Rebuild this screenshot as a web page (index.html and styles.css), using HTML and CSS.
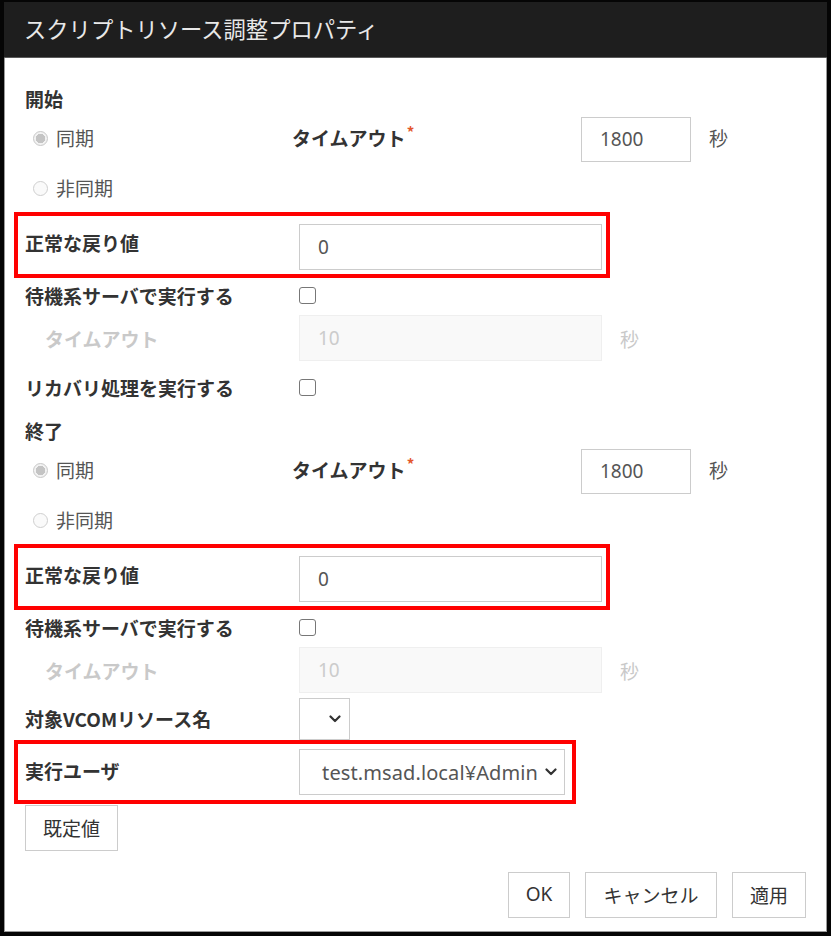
FILE: index.html
```html
<!DOCTYPE html>
<html lang="ja">
<head>
<meta charset="utf-8">
<title>スクリプトリソース調整プロパティ</title>
<link rel="stylesheet" href="styles.css">
</head>
<body>
<div class="dialog">
  <div class="frame">
    <div class="titlebar">スクリプトリソース調整プロパティ</div>
    <div class="content">

      <section class="group">
        <div class="group-title">開始</div>
        <div class="row row-sync">
          <label class="radio-cell"><input type="radio" class="radio" checked disabled>同期</label>
          <span class="timeout-label">タイムアウト<sup class="req">*</sup></span>
          <input class="field field-num" type="text" value="1800">
          <span class="unit">秒</span>
        </div>
        <div class="row row-async">
          <label class="radio-cell"><input type="radio" class="radio" disabled>非同期</label>
        </div>
        <div class="row hl hl-wide">
          <span class="label hl-label">正常な戻り値</span>
          <input class="field field-wide" type="text" value="0">
        </div>
        <div class="row row-check">
          <span class="label">待機系サーバで実行する</span>
          <input type="checkbox" class="check">
        </div>
        <div class="row row-timeout">
          <span class="label label-disabled">タイムアウト</span>
          <input class="field field-wide field-disabled" type="text" value="10" disabled>
          <span class="unit unit-disabled">秒</span>
        </div>
        <div class="row row-last">
          <span class="label">リカバリ処理を実行する</span>
          <input type="checkbox" class="check">
        </div>
      </section>

      <section class="group group-end">
        <div class="group-title">終了</div>
        <div class="row row-sync">
          <label class="radio-cell"><input type="radio" class="radio" checked disabled>同期</label>
          <span class="timeout-label">タイムアウト<sup class="req">*</sup></span>
          <input class="field field-num" type="text" value="1800">
          <span class="unit">秒</span>
        </div>
        <div class="row row-async">
          <label class="radio-cell"><input type="radio" class="radio" disabled>非同期</label>
        </div>
        <div class="row hl hl-wide">
          <span class="label hl-label">正常な戻り値</span>
          <input class="field field-wide" type="text" value="0">
        </div>
        <div class="row row-check">
          <span class="label">待機系サーバで実行する</span>
          <input type="checkbox" class="check">
        </div>
        <div class="row row-timeout">
          <span class="label label-disabled">タイムアウト</span>
          <input class="field field-wide field-disabled" type="text" value="10" disabled>
          <span class="unit unit-disabled">秒</span>
        </div>
        <div class="row row-vcom">
          <span class="label">対象VCOMリソース名</span>
          <div class="select select-small">
            <span class="select-text"></span>
            <svg class="chev" width="12" height="8" viewBox="0 0 12 8"><path d="M1.5 1.5 L6 6 L10.5 1.5" fill="none" stroke="#333" stroke-width="2.2" stroke-linecap="round" stroke-linejoin="round"/></svg>
          </div>
        </div>
        <div class="row hl hl-user">
          <span class="label">実行ユーザ</span>
          <div class="select select-user">
            <span class="select-text">test.msad.local¥Admin</span>
            <svg class="chev" width="12" height="8" viewBox="0 0 12 8"><path d="M1.5 1.5 L6 6 L10.5 1.5" fill="none" stroke="#333" stroke-width="2.2" stroke-linecap="round" stroke-linejoin="round"/></svg>
          </div>
        </div>
      </section>

      <div class="default-row">
        <button class="btn btn-default" type="button">既定値</button>
      </div>

      <div class="footer">
        <button class="btn btn-ok" type="button">OK</button>
        <button class="btn btn-cancel" type="button">キャンセル</button>
        <button class="btn btn-apply" type="button">適用</button>
      </div>
    </div>
  </div>
</div>
</body>
</html>
```

FILE: styles.css
```css
* { box-sizing: border-box; }

html, body {
  margin: 0;
  padding: 0;
  background: #ffffff;
}

body {
  font-family: "Noto Sans CJK JP", "Noto Sans", sans-serif;
  font-size: 19px;
  color: #333333;
}

.dialog {
  width: 831px;
  height: 936px;
  border: 4px solid #050505;
  border-top-width: 2px;
  border-right-width: 4px;
  background: #ffffff;
}

.frame {
  height: 100%;
  border-left: 1px solid #9a9a9a;
  border-right: 1px solid #9a9a9a;
  border-bottom: 1px solid #9a9a9a;
  display: flex;
  flex-direction: column;
}

.titlebar {
  height: 56px;
  background: #1e1e1e;
  border-bottom: 1px solid #5a5a5a;
  color: #e8e8e8;
  font-size: 22.3px;
  line-height: 53px;
  padding-left: 20px;
  margin-left: -1px;
  margin-right: -1px;
}

.content {
  padding: 26px 20px 0 20px;
  display: flex;
  flex-direction: column;
}

.group {
  display: flex;
  flex-direction: column;
  margin-bottom: 4px;
}

.group-end {
  margin-bottom: 0;
}

.group-title {
  height: 32px;
  line-height: 30px;
  font-weight: 700;
  color: #333;
}

.row {
  display: flex;
  align-items: center;
}

.row-sync { height: 46px; }
.row-sync .radio-cell,
.row-sync .timeout-label { margin-bottom: 4px; }
.row-async { height: 50px; }
.row-check { height: 36px; padding-bottom: 2px; }
.row-timeout { height: 50px; padding-bottom: 2px; }
.row-last { height: 48px; padding-bottom: 2px; }
.row-vcom { height: 44px; padding-top: 1px; }

.radio-cell {
  width: 267px;
  display: flex;
  align-items: center;
  color: #555;
  font-weight: 400;
}

.radio {
  appearance: none;
  -webkit-appearance: none;
  width: 15px;
  height: 15px;
  margin: 2px 8px 0 8px;
  border: 1px solid #cfcfcf;
  border-radius: 50%;
  background: #fafafa;
}

.radio:checked {
  background: radial-gradient(circle, #c4c4c4 0 4.5px, #f2f2f2 5px);
  border-color: #c8c8c8;
}

.timeout-label {
  width: 289px;
  font-weight: 700;
  color: #333;
}

.req {
  color: #e4572e;
  font-size: 15px;
  vertical-align: 8px;
  line-height: 0;
  margin-left: 1px;
}

.label {
  width: 274px;
  flex: none;
  font-weight: 700;
  color: #333;
}

.label-disabled {
  color: #c9c9c9;
  padding-left: 20px;
}

.field {
  font-family: "Noto Sans", "Noto Sans CJK JP", sans-serif;
  font-size: 19px;
  color: #555;
  background: #fff;
  border: 1px solid #cccccc;
  border-radius: 0;
  margin: 0;
  padding: 0 0 0 18px;
  outline: none;
}

.field-num {
  width: 110px;
  height: 45px;
}

.field-wide {
  width: 303px;
  height: 46px;
}

.field-disabled {
  background: #f9f9f9;
  border-color: #efefef;
  color: #cccccc;
}

.unit {
  margin-left: 18px;
  color: #555;
}

.row-sync .unit { margin-bottom: 3px; }

.unit-disabled {
  color: #c9c9c9;
}

.check {
  appearance: none;
  -webkit-appearance: none;
  width: 17px;
  height: 17px;
  margin: 0;
  border: 1.5px solid #777;
  border-radius: 3px;
  background: #fff;
}

/* highlighted (red framed) rows */
.hl {
  border: 4px solid #ff0000;
  margin-left: -11px;
  padding-left: 7px;
}

.hl-wide {
  width: 596px;
  height: 66px;
  padding-top: 4px;
}

.hl-label {
  margin-bottom: 10px;
}

.hl-user {
  width: 562px;
  height: 64px;
}

.hl-user .label {
  margin-bottom: 3px;
}

.select {
  display: flex;
  align-items: center;
  justify-content: flex-end;
  border: 1px solid #cccccc;
  background: #fff;
  font-family: "Noto Sans", "Noto Sans CJK JP", sans-serif;
  font-size: 20px;
  color: #555;
}

.select-small {
  width: 51px;
  height: 42px;
  padding-right: 8px;
}

.select-user {
  width: 266px;
  height: 46px;
  padding-right: 7px;
}

.select-text {
  margin-right: 7px;
  letter-spacing: 0.1px;
}

.chev { display: block; flex: none; }

.btn {
  font-family: "Noto Sans CJK JP", "Noto Sans", sans-serif;
  font-size: 19px;
  color: #333;
  background: #fff;
  border: 1px solid #cccccc;
  border-radius: 0;
  height: 46px;
  padding: 0 0 2px 0;
  margin: 0;
}

.default-row {
  margin-top: 1px;
  display: flex;
}

.btn-default { width: 93px; }

.footer {
  margin-top: 21px;
  display: flex;
  justify-content: flex-end;
  gap: 15px;
}

.btn-ok { width: 62px; font-family: "Noto Sans", sans-serif; }
.btn-cancel { width: 132px; }
.btn-apply { width: 74px; }
```
